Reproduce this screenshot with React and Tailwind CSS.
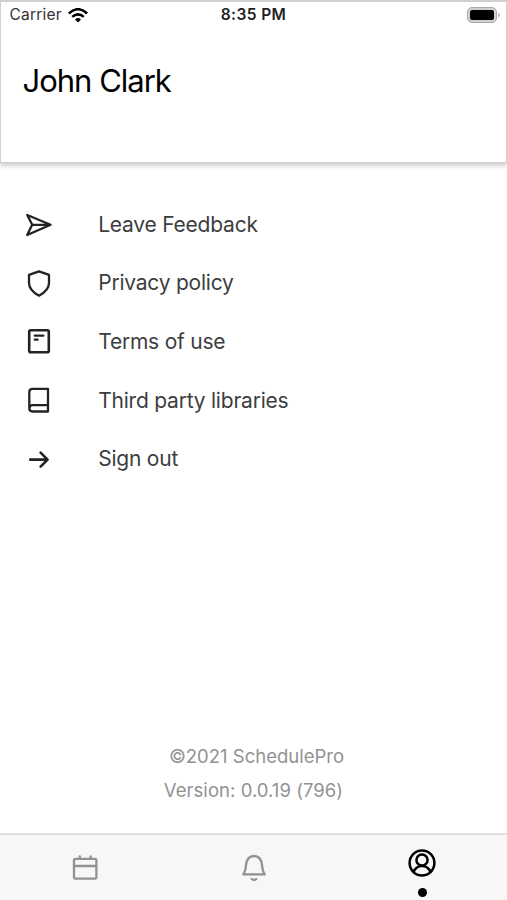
import React from "react";

function Icon({ className = "", children, width = 2.3 }) {
  return (
    <svg
      viewBox="0 0 30 30"
      className={`h-[30px] w-[30px] shrink-0 ${className}`}
      fill="none"
      stroke="currentColor"
      strokeWidth={width}
      strokeLinecap="round"
      strokeLinejoin="round"
    >
      {children}
    </svg>
  );
}

const SendIcon = () => (
  <Icon>
    <path d="M3.2 6 26.600 15.800 3.2 26 8.2 15.800ZM8.2 15.800H26" />
  </Icon>
);

const ShieldIcon = () => (
  <Icon>
    <path d="M15 3.300 25 6.900v8c0 6-4 9.400-10 12.800C9 24.300 5 20.900 5 14.900v-8Z" />
  </Icon>
);

const DocumentIcon = () => (
  <Icon width={2.6}>
    <rect x="5.200" y="4.200" width="19.600" height="22" rx="1.500" />
    <path d="M10.800 9.600h8.500M10.800 13.600h2.800" strokeWidth="2.400" />
  </Icon>
);

const BookIcon = () => (
  <Icon>
    <path d="M8.500 3.800h15.500v22.700H8.500q-3.200 0-3.200-3.200V7Q5.300 3.800 8.500 3.800ZM5.500 23q.3-2.800 3-2.800h15.500" />
  </Icon>
);

const ArrowIcon = () => (
  <Icon width={2.6}>
    <path d="M6.200 15.600h17.200M16.600 8.600l7 7-7 7" />
  </Icon>
);

const items = [
  { label: "Leave Feedback", Glyph: SendIcon },
  { label: "Privacy policy", Glyph: ShieldIcon },
  { label: "Terms of use", Glyph: DocumentIcon },
  { label: "Third party libraries", Glyph: BookIcon },
  { label: "Sign out", Glyph: ArrowIcon },
];

function StatusBar() {
  return (
    <div className="grid h-[26px] grid-cols-3 items-center text-[15.500px] leading-[26px]">
      <div className="flex items-center pl-[8.500px] text-[#333]">
        <span className="tracking-[0.200px]">Carrier</span>
        <svg viewBox="0 0 20 15" className="ml-[6px] h-[15px] w-[20px]" fill="none" stroke="#000" strokeWidth="2.600">
          <path d="M.9 5.500Q10-3 19.100 5.500M4.200 8.900q5.800-5.200 11.600 0" />
          <path d="m10 14.500-3-3.100q3-2.600 6 0Z" fill="#000" stroke="none" />
        </svg>
      </div>
      <span className="text-center font-semibold tracking-[0.400px] text-[#222]">8:35 PM</span>
      <div className="flex items-center justify-end pr-[6px]">
        <div className="h-[16px] w-[30px] rounded-[5px] border border-[#aaa] bg-[#d0d0d0] p-[2px]">
          <div className="h-full rounded-[2px] bg-black" />
        </div>
        <div className="ml-px h-[4px] w-[2px] rounded-r-full bg-[#bbb]" />
      </div>
    </div>
  );
}

export default function App() {
  return (
    <div className="flex h-[900px] w-[507px] flex-col overflow-hidden bg-white font-[Inter,sans-serif] text-[#3b3b3d]">
      <header className="h-[163px] shrink-0 border-[1.500px] border-t-2 border-[#d0d0d0] bg-white shadow-[0_3px_5px_rgba(0,0,0,0.2)]">
        <StatusBar />
        <h1 className="pl-[21.500px] pt-[32.500px] text-[31px] leading-[40px] tracking-[-1px] text-black">John Clark</h1>
      </header>

      <ul className="mt-[32px] shrink-0">
        {items.map(({ label, Glyph }) => (
          <li key={label} className="flex h-[58.600px] items-center pl-[23.500px] text-[#222325]">
            <Glyph />
            <span className="ml-[44.700px] whitespace-nowrap pt-px text-[21px] leading-[28px] tracking-[-0.220px] text-[#3d3d3f]">
              {label}
            </span>
          </li>
        ))}
      </ul>

      <div className="mt-auto mb-[26px] flex flex-col items-center text-[18.500px] leading-[34px] text-[#929292]">
        <p className="pl-[6px]">©2021 SchedulePro</p>
        <p className="tracking-[0.050px]">Version: 0.0.19 (796)</p>
      </div>

      <nav className="grid h-[67px] shrink-0 grid-cols-3 border-t-2 border-[#dedede] bg-[#f7f7f7] text-[#929292]">
        <div className="flex justify-center pt-[18px]">
          <Icon>
            <rect x="4" y="5.800" width="22.400" height="19.800" rx="1.500" />
            <path d="M4.200 13h22M9.800 3.500v2M20.600 3.500v2" />
          </Icon>
        </div>
        <div className="flex justify-center pt-[18px]">
          <Icon>
            <path d="M4.200 21.300q2.100-2.100 2.800-9.100C7.600 6.300 10.500 3 15 3s7.400 3.300 8 9.200q.7 7 2.800 9.100ZM12.800 26q2.200 2 4.400 0" />
          </Icon>
        </div>
        <div className="flex flex-col items-center pr-px pt-[13px] text-black">
          <Icon width={2.500}>
            <circle cx="15" cy="15" r="12.400" />
            <circle cx="15" cy="12" r="5.600" />
            <path d="M6.500 24q2.500-6 8.500-6t8.500 6" />
          </Icon>
          <span className="mt-[10px] h-[9px] w-[9px] rounded-full bg-black" />
        </div>
      </nav>
    </div>
  );
}
